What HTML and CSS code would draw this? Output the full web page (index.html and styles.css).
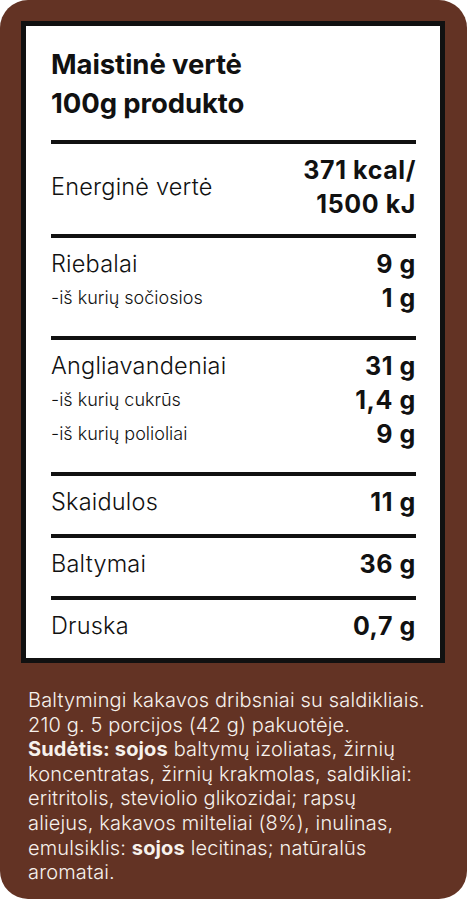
FILE: index.html
```html
<!DOCTYPE html>
<html lang="lt">
<head>
  <meta charset="UTF-8" />
  <meta name="viewport" content="width=device-width, initial-scale=1.0"/>
  <title>Maistinė vertė</title>
  <link rel="stylesheet" href="styles.css">
</head>
<body>
  <div class="card">
    <section class="facts">
      <h1 class="facts-title">Maistinė vertė<br>100g produkto</h1>

      <div class="group group-energy">
        <div class="row">
          <span class="label">Energinė vertė</span>
          <span class="value">371 kcal/<br>1500 kJ</span>
        </div>
      </div>

      <div class="group group-tall">
        <div class="row">
          <span class="label">Riebalai</span>
          <span class="value">9 g</span>
        </div>
        <div class="row sub">
          <span class="label">-iš kurių sočiosios</span>
          <span class="value">1 g</span>
        </div>
      </div>

      <div class="group group-tall">
        <div class="row">
          <span class="label">Angliavandeniai</span>
          <span class="value">31 g</span>
        </div>
        <div class="row sub">
          <span class="label">-iš kurių cukrūs</span>
          <span class="value">1,4 g</span>
        </div>
        <div class="row sub">
          <span class="label">-iš kurių polioliai</span>
          <span class="value">9 g</span>
        </div>
      </div>

      <div class="group">
        <div class="row">
          <span class="label">Skaidulos</span>
          <span class="value">11 g</span>
        </div>
      </div>

      <div class="group">
        <div class="row">
          <span class="label">Baltymai</span>
          <span class="value">36 g</span>
        </div>
      </div>

      <div class="group">
        <div class="row">
          <span class="label">Druska</span>
          <span class="value">0,7 g</span>
        </div>
      </div>
    </section>

    <div class="desc">
      <p>Baltymingi kakavos dribsniai su saldikliais.</p>
      <p>210 g. 5 porcijos (42 g) pakuotėje.</p>
      <p><b>Sudėtis: sojos</b> baltymų izoliatas, žirnių<br>
        koncentratas, žirnių krakmolas, saldikliai:<br>
        eritritolis, steviolio glikozidai; rapsų<br>
        aliejus, kakavos milteliai (8%), inulinas,<br>
        emulsiklis: <b>sojos</b> lecitinas; natūralūs<br>
        aromatai.</p>
    </div>
  </div>
</body>
</html>
```

FILE: styles.css
```css
:root {
  --brown: #633324;
  --ink: #111111;
  --cream: #f6f1ec;
}

* {
  box-sizing: border-box;
  font-family: 'Inter', 'Noto Sans', sans-serif;
}

body {
  margin: 0;
  background: #ffffff;
}

.card {
  width: 467px;
  height: 899px;
  background: var(--brown);
  border-radius: 28px;
  padding: 21px 22px 0 21px;
}

.facts {
  background: #fff;
  border: 5px solid var(--ink);
  padding: 19px 24px 0 25px;
  color: var(--ink);
}

.facts-title {
  margin: 0 0 18px;
  font-size: 27.5px;
  line-height: 38.5px;
  font-weight: 700;
  letter-spacing: -0.1px;
}

.group {
  border-top: 4px solid var(--ink);
  padding: 9px 0 15px;
}

.group-energy {
  padding-bottom: 13px;
}

.group-tall {
  padding-bottom: 21px;
}

.row {
  display: flex;
  justify-content: space-between;
  align-items: center;
  line-height: 34px;
}

.label {
  font-size: 23.5px;
  font-weight: 300;
  letter-spacing: 0.2px;
}

.sub .label {
  font-size: 18px;
  letter-spacing: 0;
}

.value {
  font-size: 25px;
  font-weight: 700;
  letter-spacing: 0.6px;
  text-align: right;
}

.desc {
  margin-top: 25px;
  padding: 0 4px 0 7px;
  color: var(--cream);
  font-size: 20px;
  line-height: 24.6px;
  font-weight: 350;
  letter-spacing: 0.15px;
  white-space: nowrap;
}

.desc p {
  margin: 0;
}

.desc b {
  font-weight: 700;
}
```
